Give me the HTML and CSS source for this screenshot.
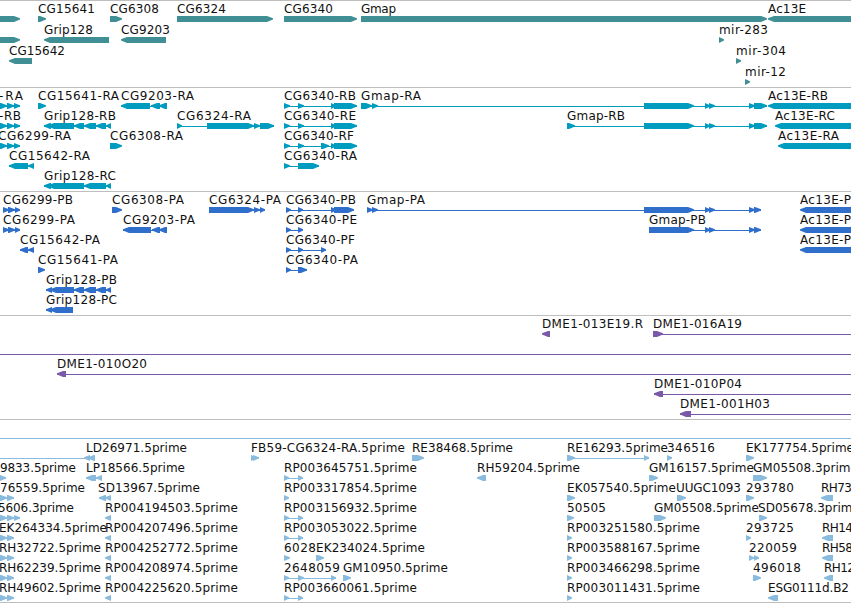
FILE: index.html
```
<!DOCTYPE html>
<html lang="en">
<head>
    <meta charset="UTF-8">
    <meta name="viewport" content="width=device-width, initial-scale=1.0">
    <title>Genome Tracks</title>
    <link rel="stylesheet" href="styles.css">
</head>
<body>
    <main class="browser">
        <svg class="track genes" id="genes"></svg>
        <svg class="track transcripts" id="transcripts"></svg>
        <svg class="track proteins" id="proteins"></svg>
        <svg class="track clones" id="clones"></svg>
        <svg class="track ests" id="ests"></svg>
    </main>
    <script src="tracks.js"></script>
</body>
</html>
```
FILE: styles.css
```
* {
    margin: 0;
    padding: 0;
    box-sizing: border-box;
}

body {
    background-color: #fff;
    overflow: hidden;
}

.browser {
    display: flex;
    flex-direction: column;
    width: 851px;
    border-bottom: 1px solid #bebebe;
}

.track {
    display: block;
    width: 100%;
    border-top: 1px solid #bebebe;
    overflow: hidden;
}

.track text {
    font-family: "DejaVu Sans", sans-serif;
    font-size: 12px;
    fill: #111;
}

.genes {
    height: 87px;
    fill: #408f94;
}

.transcripts {
    height: 104px;
    fill: #009cbf;
}

.proteins {
    height: 124px;
    fill: #306ecc;
}

.clones {
    height: 104px;
    fill: #7959a8;
}

.ests {
    height: 183px;
    fill: #88bbdd;
}
```
FILE: tracks.js
```
// feature: [row, label, label start, label end, strand, blocks, line end]
// blocks are [start, end] pairs, joined by a thin line
const L = -40;
const R = 900;

const exonsLeft = [[L, -20], [0, 7], [7, 14], [14, 20]];
const gmapEnd = [[705, 710], [709, 715], [749, 755], [754, 767]];
const gmapCds = [[705, 710], [709, 715], [749, 755], [754, 761]];
const gripExons = [[74, 84], [84, 96], [96, 106], [106, 111]];
const rp = [[284, 289], [298, 303]];
const pair = [[L, -20], [0, 7], [7, 14]];

const genes = [
    [0, '', 0, 0, '+', [[L, 20]]],
    [0, 'CG15641', 38, 95, '+', [[38, 46]]],
    [0, 'CG6308', 110, 159, '+', [[110, 122]]],
    [0, 'CG6324', 177, 226, '+', [[177, 273]]],
    [0, 'CG6340', 284, 333, '+', [[284, 357]]],
    [0, 'Gmap', 361, 396, '+', [[361, 767]]],
    [0, 'Ac13E', 768, 806, '-', [[768, R]]],
    [1, '', 0, 0, '+', [[L, 20]]],
    [1, 'Grip128', 44, 93, '-', [[44, 109]]],
    [1, 'CG9203', 121, 170, '-', [[121, 166]]],
    [1, 'mir-283', 719, 768, '+', [[719, 724]]],
    [2, 'CG15642', 9, 65, '-', [[9, 32]]],
    [2, 'mir-304', 736, 786, '+', [[736, 741]]],
    [3, 'mir-12', 745, 786, '+', [[745, 750]]]
];

const transcripts = [
    [0, '-RA', -1, 23, '+', exonsLeft],
    [0, 'CG15641-RA', 38, 119, '+', [[38, 46]]],
    [0, 'CG9203-RA', 121, 194, '-', [[121, 150], [151, 160], [159, 167]]],
    [0, 'CG6340-RB', 284, 356, '+', [[284, 290], [298, 304], [331, 336], [334, 357]]],
    [0, 'Gmap-RA', 361, 421, '+', [[361, 372], [372, 378], [644, 694], ...gmapEnd]],
    [0, 'Ac13E-RB', 768, 828, '-', [[768, R]]],
    [1, '-RB', -1, 21, '+', exonsLeft],
    [1, 'Grip128-RB', 44, 116, '-', [[44, 51], [48, 74], ...gripExons]],
    [1, 'CG6324-RA', 177, 251, '+', [[177, 182], [207, 254], [254, 260], [260, 274]]],
    [1, 'CG6340-RE', 284, 356, '+', [[284, 290], [298, 304], [331, 336], [334, 357]]],
    [1, 'Gmap-RB', 567, 625, '+', [[567, 575], [644, 694], ...gmapEnd]],
    [1, 'Ac13E-RC', 775, 835, '-', [[775, R]]],
    [2, 'CG6299-RA', -2, 71, '+', exonsLeft],
    [2, 'CG6308-RA', 110, 183, '+', [[110, 122]]],
    [2, 'CG6340-RF', 284, 354, '+', [[284, 290], [298, 304], [321, 329], [331, 336], [334, 357]]],
    [2, 'Ac13E-RA', 778, 839, '-', [[778, R]]],
    [3, 'CG15642-RA', 9, 90, '-', [[9, 28], [28, 34]]],
    [3, 'CG6340-RA', 284, 357, '+', [[284, 290], [298, 319]]],
    [4, 'Grip128-RC', 44, 116, '-', [[44, 51], [48, 84], [84, 106], [106, 111]]]
];

const proteins = [
    [0, 'CG6299-PB', 3, 73, '+', [[3, 9], [8, 15], [15, 20]]],
    [0, 'CG6308-PA', 112, 184, '+', [[112, 122]]],
    [0, 'CG6324-PA', 209, 281, '+', [[209, 254], [254, 260], [260, 265]]],
    [0, 'CG6340-PB', 286, 356, '+', [[286, 291], [298, 303], [331, 336], [334, 354]]],
    [0, 'Gmap-PA', 367, 425, '+', [[367, 373], [372, 378], [644, 694], ...gmapCds]],
    [0, 'Ac13E-P', 800, 851, '-', [[800, R]]],
    [1, 'CG6299-PA', 3, 75, '+', [[3, 9], [8, 15], [15, 20]]],
    [1, 'CG9203-PA', 123, 195, '-', [[123, 151], [152, 160], [159, 167]]],
    [1, 'CG6340-PE', 286, 357, '+', [[286, 291], [298, 303]]],
    [1, 'Gmap-PB', 649, 706, '+', [[649, 694], ...gmapCds]],
    [1, 'Ac13E-P', 800, 851, '-', [[800, R]]],
    [2, 'CG15642-PA', 20, 100, '-', [[20, 28], [28, 34]]],
    [2, 'CG6340-PF', 286, 355, '+', [[286, 291], [298, 303], [321, 326]]],
    [2, 'Ac13E-P', 800, 851, '-', [[800, R]]],
    [3, 'CG15641-PA', 38, 118, '+', [[38, 45]]],
    [3, 'CG6340-PA', 286, 358, '+', [[286, 291], [298, 307]]],
    [4, 'Grip128-PB', 46, 117, '-', [[46, 52], [50, 74], ...gripExons]],
    [5, 'Grip128-PC', 46, 117, '-', [[46, 52], [50, 73]]]
];

const clones = [
    [0, 'DME1-013E19.R', 541, 643, '-', [[542, 550]]],
    [0, 'DME1-016A19', 652, 742, '+', [[653, 663]], R],
    [1, '', 0, 0, '+', [[L, -20]], R],
    [2, 'DME1-010O20', 56, 147, '-', [[57, 66]], R],
    [3, 'DME1-010P04', 653, 742, '-', [[654, 663]], R],
    [4, 'DME1-001H03', 679, 770, '-', [[680, 691]], R]
];

const ests = [
    [0, '', 0, 0, '+', [[L, -20]], R],
    [1, 'LD26971.5prime', 85, 187, '-', [[L, -20], [84, 90], [88, 95]]],
    [1, 'FB59-CG6324-RA.5prime', 250, 405, '+', [[251, 256], [253, 259]]],
    [1, 'RE38468.5prime', 411, 513, '+', [[412, 424]]],
    [1, 'RE16293.5prime', 566, 668, '+', [[567, 575], [644, 649]]],
    [1, '346516', 666, 715, '+', [[667, 672]]],
    [1, 'EK177754.5prime', 745, 854, '+', [[746, 754]]],
    [2, '9833.5prime', -1, 76, '+', [[L, -20], [0, 6]]],
    [2, 'LP18566.5prime', 85, 185, '-', [[86, 96], [96, 102]]],
    [2, 'RP003645751.5prime', 283, 417, '+', rp],
    [2, 'RH59204.5prime', 476, 580, '-', [[477, 486]]],
    [2, 'GM16157.5prime', 648, 754, '+', [[649, 658]]],
    [2, 'GM05508.3prime', 752, 858, '+', [[753, 767]]],
    [3, '76559.5prime', -1, 85, '+', pair],
    [3, 'SD13967.5prime', 97, 200, '-', [[99, 106], [105, 111]]],
    [3, 'RP003317854.5prime', 283, 417, '+', [[284, 289]]],
    [3, 'EK057540.5prime', 566, 676, '+', [[567, 575]]],
    [3, 'UUGC1093', 675, 741, '+', [[677, 686]]],
    [3, '293780', 745, 794, '+', [[746, 754]]],
    [3, 'RH73', 820, 852, '-', [[821, 833]]],
    [4, '5606.3prime', -3, 74, '+', exonsLeft],
    [4, 'RP004194503.5prime', 104, 238, '-', [[105, 111]]],
    [4, 'RP003156932.5prime', 283, 417, '+', rp],
    [4, '50505', 566, 606, '+', [[567, 574]]],
    [4, 'GM05508.5prime', 653, 759, '+', [[654, 666]]],
    [4, 'SD05678.3prime', 757, 860, '+', [[759, 767]]],
    [5, 'EK264334.5prime', -2, 107, '+', pair],
    [5, 'RP004207496.5prime', 104, 238, '-', [[105, 111]]],
    [5, 'RP003053022.5prime', 283, 417, '+', rp],
    [5, 'RP003251580.5prime', 566, 700, '+', [[567, 572]]],
    [5, '293725', 745, 794, '+', [[746, 751]]],
    [5, 'RH14', 821, 853, '-', [[822, 833]]],
    [6, 'RH32722.5prime', -2, 101, '+', pair],
    [6, 'RP004252772.5prime', 104, 238, '-', [[105, 111]]],
    [6, '6028', 283, 316, '+', [[284, 290]]],
    [6, 'EK234024.5prime', 315, 425, '+', [[316, 324]]],
    [6, 'RP003588167.5prime', 566, 700, '+', [[567, 572]]],
    [6, '220059', 748, 797, '+', [[749, 754], [754, 759]]],
    [6, 'RH58', 821, 853, '-', [[822, 833]]],
    [7, 'RH62239.5prime', -2, 101, '+', pair],
    [7, 'RP004208974.5prime', 104, 238, '-', [[105, 111]]],
    [7, '2648059', 283, 340, '+', [[284, 289], [298, 304], [331, 336]]],
    [7, 'GM10950.5prime', 342, 448, '+', [[343, 351]]],
    [7, 'RP003466298.5prime', 566, 700, '+', [[567, 572]]],
    [7, '496018', 752, 801, '+', [[753, 761]]],
    [7, 'RH12', 823, 855, '-', [[824, 833]]],
    [8, 'RH49602.5prime', -2, 101, '+', pair],
    [8, 'RP004225620.5prime', 104, 238, '-', [[105, 111]]],
    [8, 'RP003660061.5prime', 283, 417, '+', rp],
    [8, 'RP003011431.5prime', 566, 700, '+', [[567, 572]]],
    [8, 'ESG0111d.B2', 767, 849, '-', [[768, 778]]]
];

function add(parent, tag, attrs) {
    const el = document.createElementNS('http://www.w3.org/2000/svg', tag);
    for (const key in attrs) {
        el.setAttribute(key, attrs[key]);
    }
    parent.appendChild(el);
    return el;
}

// Box with a pointed end on the side of the strand
function drawBlock(svg, start, end, top, strand) {
    const head = Math.min(6, end - start);
    const tip = strand === '+' ? end : start;
    const tail = strand === '+' ? start : end;
    const neck = strand === '+' ? end - head : start + head;
    const points = [
        [tail, top], [neck, top], [tip, top + 2.2],
        [tip, top + 3.5], [neck, top + 6], [tail, top + 6]
    ];
    add(svg, 'polygon', { points: points.join(' ') });
}

function drawTrack(id, features, pitch, labelShift) {
    const svg = document.getElementById(id);
    features.forEach(([row, label, from, to, strand, blocks, lineEnd]) => {
        const top = 15 + row * pitch;
        const start = blocks[0][0];
        const end = lineEnd || blocks[blocks.length - 1][1];
        if (blocks.length > 1 || lineEnd) {
            add(svg, 'rect', { x: start, y: top + 3, width: end - start, height: 1 });
        }
        blocks.forEach(([a, b]) => drawBlock(svg, a, b, top, strand));
        if (label) {
            const x = from + labelShift;
            const text = add(svg, 'text', { x: x, y: top - 3, textLength: to - x });
            text.textContent = label;
        }
    });
}

drawTrack('genes', genes, 21, 0);
drawTrack('transcripts', transcripts, 20, 0);
drawTrack('proteins', proteins, 20, 0);
drawTrack('clones', clones, 20, 1);
drawTrack('ests', ests, 20, 1);
```
